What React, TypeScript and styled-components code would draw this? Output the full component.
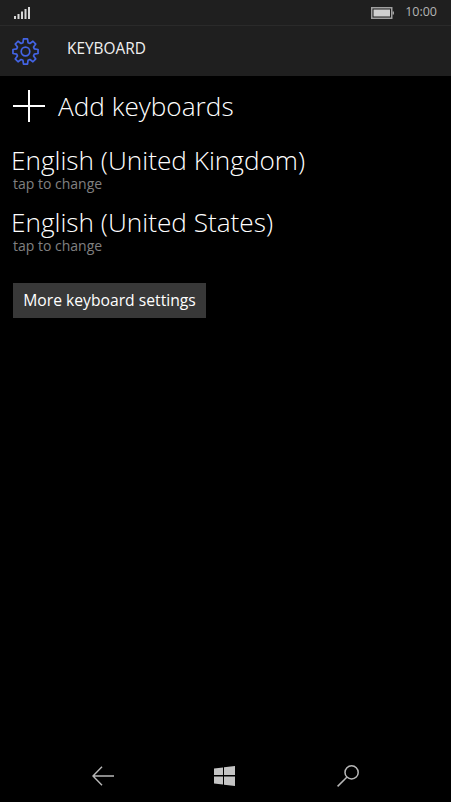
import React from "react";
import styled, { createGlobalStyle } from "styled-components";

const Global = createGlobalStyle`
  html, body { margin: 0; padding: 0; background: #000; }
  #root { width: 451px; height: 802px; }
`;

const Screen = styled.div`
  width: 451px;
  height: 802px;
  background: #000;
  color: #fff;
  font-family: "Open Sans", "Noto Sans", sans-serif;
  display: flex;
  flex-direction: column;
  overflow: hidden;
`;

const StatusBar = styled.div`
  height: 26px;
  box-sizing: border-box;
  background: #1f1f1f;
  border-bottom: 1px solid #2a2a2a;
  display: flex;
  align-items: center;
  justify-content: space-between;
  padding: 0 14px 0 14px;
`;

const StatusRight = styled.div`
  display: flex;
  align-items: center;
  gap: 11px;
`;

const Clock = styled.span`
  font-size: 12.5px;
  font-weight: 400;
  color: #b4b4b4;
  line-height: 1;
`;

const Header = styled.div`
  height: 50px;
  background: #1f1f1f;
  display: flex;
  align-items: center;
  padding-left: 12px;
  gap: 28px;
`;

const HeaderTitle = styled.span`
  font-size: 15.4px;
  font-weight: 400;
  color: #f0f0f0;
  line-height: 20px;
  margin-bottom: 4px;
`;

const Content = styled.div`
  flex: 1;
  display: flex;
  flex-direction: column;
  align-items: flex-start;
  padding-left: 11px;
`;

const AddRow = styled.div`
  display: flex;
  align-items: center;
  gap: 13px;
  height: 60px;
  margin-bottom: 10px;
  padding-left: 2px;
`;

const AddLabel = styled.span`
  font-size: 26.2px;
  font-weight: 300;
  line-height: 30px;
`;

const Language = styled.div`
  height: 62px;
  display: flex;
  flex-direction: column;
`;

const LanguageName = styled.div`
  font-size: 26.2px;
  font-weight: 300;
  line-height: 30px;
  margin-top: -1px;
  margin-bottom: 1px;
`;

const LanguageHint = styled.div`
  font-size: 14px;
  color: #808080;
  line-height: 16px;
  margin-left: 2px;
`;

const SettingsButton = styled.button`
  margin: 13px 0 0 2px;
  width: 193px;
  height: 35px;
  padding: 0 0 1px;
  border: none;
  background: #383838;
  color: #fff;
  font-family: inherit;
  font-size: 15.7px;
  font-weight: 400;
`;

const NavBar = styled.div`
  height: 52px;
  display: flex;
  align-items: center;
  gap: 100px;
  padding-left: 92px;
`;

const gearPath = (() => {
  const c = 13.5;
  const teeth = 8;
  const pts: string[] = [];
  for (let i = 0; i < teeth; i++) {
    const a = (i * 2 * Math.PI) / teeth - Math.PI / 2;
    const step = (2 * Math.PI) / teeth;
    const at = (r: number, d: number) =>
      `${(c + r * Math.cos(a + d * step)).toFixed(2)} ${(c + r * Math.sin(a + d * step)).toFixed(2)}`;
    pts.push(at(9.2, -0.36), at(12.7, -0.2), at(12.7, 0.2), at(9.2, 0.36));
  }
  return `M${pts.join("L")}Z`;
})();

const Bars = () => (
  <svg width="17" height="13" viewBox="0 0 17 13" fill="#d8d8d8">
    <rect x="0" y="10" width="2" height="3" />
    <rect x="3.5" y="8" width="2" height="5" />
    <rect x="7" y="5.5" width="2" height="7.5" />
    <rect x="10.5" y="3" width="2" height="10" />
    <rect x="14" y="1" width="2" height="12" />
  </svg>
);

const Battery = () => (
  <svg width="23" height="12" viewBox="0 0 23 12">
    <rect x="0.75" y="0.75" width="20" height="10.5" fill="none" stroke="#a0a0a0" strokeWidth="1.5" />
    <rect x="2.5" y="2.5" width="16.5" height="7" fill="#d0d0d0" />
    <rect x="21.5" y="4.5" width="1.5" height="3" fill="#a0a0a0" />
  </svg>
);

const Gear = () => (
  <svg width="27" height="27" viewBox="0 0 27 27" fill="none" stroke="#4364e4" strokeWidth="1.7" strokeLinejoin="round">
    <path d={gearPath} />
    <circle cx="13.5" cy="13.5" r="4.3" />
  </svg>
);

const Plus = () => (
  <svg width="32" height="32" viewBox="0 0 32 32" stroke="#fff" strokeWidth="2">
    <path d="M0 16h32M16 0v32" />
  </svg>
);

const BackArrow = () => (
  <svg width="22" height="20" viewBox="0 0 22 20" fill="none" stroke="#b8b8b8" strokeWidth="1.4">
    <path d="M22 10H1.2M10 .7 1 10l9 9.3" />
  </svg>
);

const WindowsLogo = () => (
  <svg width="23" height="20" viewBox="0 0 23 20" fill="#c4c4c4">
    <path d="M0 2.6 9 1.4v7.6H0zM10 1.2 21 0v9H10zM0 10.6h9v8L0 17.5zM10 10.6h11V20l-11-1.3z" />
  </svg>
);

const SearchIcon = () => (
  <svg width="22" height="22" viewBox="0 0 22 22" fill="none" stroke="#b8b8b8" strokeWidth="1.5">
    <circle cx="14.6" cy="7.4" r="6.6" />
    <path d="M9.8 12.2 .6 21.4" />
  </svg>
);

const languages = ["English (United Kingdom)", "English (United States)"];

export default function App() {
  return (
    <Screen>
      <Global />
      <StatusBar>
        <Bars />
        <StatusRight>
          <Battery />
          <Clock>10:00</Clock>
        </StatusRight>
      </StatusBar>
      <Header>
        <Gear />
        <HeaderTitle>KEYBOARD</HeaderTitle>
      </Header>
      <Content>
        <AddRow>
          <Plus />
          <AddLabel>Add keyboards</AddLabel>
        </AddRow>
        {languages.map((l) => (
          <Language key={l}>
            <LanguageName>{l}</LanguageName>
            <LanguageHint>tap to change</LanguageHint>
          </Language>
        ))}
        <SettingsButton>More keyboard settings</SettingsButton>
      </Content>
      <NavBar>
        <BackArrow />
        <WindowsLogo />
        <SearchIcon />
      </NavBar>
    </Screen>
  );
}
